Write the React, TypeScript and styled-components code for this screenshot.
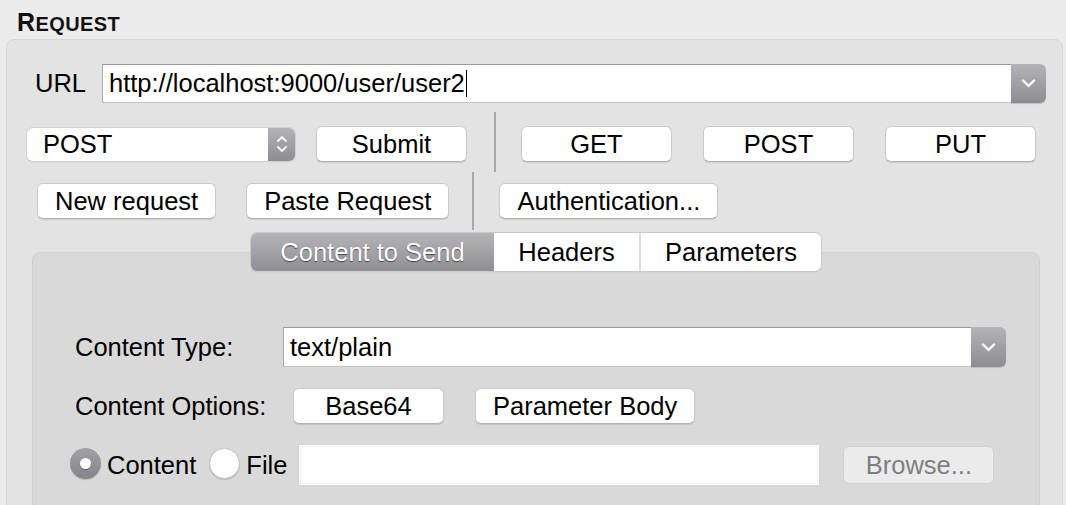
import React from "react";
import styled, { createGlobalStyle, css } from "styled-components";

const FS = "25.5px";

const GlobalStyle = createGlobalStyle`
  html, body {
    margin: 0;
    padding: 0;
    background: #ececec;
    overflow: hidden;
  }
  body {
    font-family: "Liberation Sans", Arial, Helvetica, sans-serif;
    color: #000;
  }
`;

const Page = styled.div`
  width: 1066px;
  height: 505px;
  overflow: hidden;
  font-size: ${FS};
`;

const Title = styled.h1`
  margin: 0;
  box-sizing: border-box;
  height: 39px;
  padding: 10px 0 0 17px;
  font-size: 25px;
  line-height: 25px;
  font-weight: bold;
  color: #111;
  letter-spacing: 0.4px;
  span {
    font-size: 20px;
  }
`;

const Panel = styled.section`
  margin-left: 6px;
  width: 1057px;
  box-sizing: border-box;
  background: #e3e3e3;
  border: 1px solid #d6d6d6;
  border-radius: 8px;
  padding: 24px 0 0 0;
`;

const UrlRow = styled.div`
  display: flex;
  align-items: center;
  height: 39px;
  padding-left: 28px;
`;

const FieldLabel = styled.label<{ $w?: number }>`
  flex: none;
  width: ${(p) => (p.$w ? `${p.$w}px` : "auto")};
  font-size: ${FS};
  white-space: nowrap;
`;

const Combo = styled.div<{ $w: number; $h: number }>`
  display: flex;
  width: ${(p) => p.$w}px;
  height: ${(p) => p.$h}px;
  flex: none;
`;

const ComboField = styled.div`
  flex: 1;
  display: flex;
  align-items: center;
  background: #fff;
  border: 1px solid #a9a9a9;
  border-top-color: #9a9a9a;
  border-bottom-color: #c2c2c2;
  border-right: none;
  padding-left: 6px;
  font-size: ${FS};
  white-space: nowrap;
`;

const Caret = styled.span`
  display: inline-block;
  width: 1px;
  height: 27px;
  background: #000;
  margin-left: 1px;
`;

const ComboArrow = styled.div<{ $w: number }>`
  flex: none;
  width: ${(p) => p.$w}px;
  display: flex;
  align-items: center;
  justify-content: center;
  background: linear-gradient(#b4b4b8, #8c8c91);
  border-radius: 0 6px 6px 0;
  box-shadow: 0 1px 1px rgba(0, 0, 0, 0.15);
`;

const ToolRow = styled.div<{ $top: number; $h: number; $left: number; $padTop: number }>`
  display: flex;
  align-items: center;
  margin-top: ${(p) => p.$top}px;
  height: ${(p) => p.$h}px;
  box-sizing: border-box;
  padding-left: ${(p) => p.$left}px;
  padding-top: ${(p) => p.$padTop}px;
`;

const Separator = styled.div<{ $pull: number; $ml: number }>`
  align-self: stretch;
  margin-top: ${(p) => -p.$pull}px;
  margin-left: ${(p) => p.$ml}px;
  width: 2px;
  background: #a9a9a9;
`;

const Button = styled.button<{ $ml?: number; $disabled?: boolean }>`
  flex: none;
  height: 36px;
  min-width: 151px;
  margin-left: ${(p) => p.$ml ?? 0}px;
  padding: 0 17px;
  box-sizing: border-box;
  background: #fff;
  border: 1px solid #cbcbcb;
  border-bottom-color: #b3b3b3;
  border-radius: 6px;
  box-shadow: 0 1px 1px rgba(0, 0, 0, 0.1);
  font-family: "Liberation Sans", Arial, Helvetica, sans-serif;
  font-size: ${FS};
  color: #000;
  white-space: nowrap;
  ${(p) =>
    p.$disabled &&
    css`
      height: 38px;
      background: #ebebeb;
      border-color: #d2d2d2;
      color: #7f7f7f;
      box-shadow: none;
    `}
`;

const Select = styled.div`
  flex: none;
  display: flex;
  width: 268px;
  height: 33px;
  border-radius: 6px;
  background: #fff;
  box-shadow: 0 0 0 1px #cfcfcf, 0 1px 1px rgba(0, 0, 0, 0.15);
  overflow: hidden;
`;

const SelectValue = styled.div`
  flex: 1;
  display: flex;
  align-items: center;
  padding-left: 16px;
  font-size: ${FS};
`;

const SelectArrow = styled.div`
  width: 27px;
  display: flex;
  align-items: center;
  justify-content: center;
  background: linear-gradient(#b4b4b8, #8c8c91);
`;

const TabbedPane = styled.div`
  margin: 3px 22px 0 25px;
`;

const TabBar = styled.div`
  position: relative;
  z-index: 1;
  display: flex;
  justify-content: center;
  margin-bottom: -19px;
`;

const TabGroup = styled.div`
  display: flex;
  height: 38px;
  box-sizing: border-box;
  border-radius: 6px;
  background: #fff;
  box-shadow: 0 0 0 1px #cacaca, 0 1px 1px rgba(0, 0, 0, 0.2);
  overflow: hidden;
`;

const Tab = styled.div<{ $w: number; $active?: boolean; $divider?: boolean }>`
  width: ${(p) => p.$w}px;
  display: flex;
  align-items: center;
  justify-content: center;
  font-size: ${FS};
  color: #000;
  box-sizing: border-box;
  border-left: ${(p) => (p.$divider ? "2px solid #dddddd" : "none")};
  ${(p) =>
    p.$active &&
    css`
      background: linear-gradient(#b5b5b9, #8e8e93);
      color: #fff;
      text-shadow: 0 1px 1px rgba(0, 0, 0, 0.55);
    `}
`;

const InnerPanel = styled.div`
  background: #d9d9d9;
  border: 1px solid #cfcfcf;
  border-radius: 8px;
  padding: 74px 33px 60px 37px;
`;

const FormGrid = styled.div`
  display: grid;
  grid-template-columns: 208px 723px;
  row-gap: 21px;
  align-items: center;
  padding-left: 5px;
`;

const ButtonGroup = styled.div`
  display: flex;
  gap: 31px;
  padding-left: 10px;
`;

const RadioRow = styled.div`
  display: flex;
  align-items: center;
  height: 42px;
  margin-top: 20px;
`;

const Radio = styled.span<{ $checked?: boolean; $ml?: number }>`
  flex: none;
  position: relative;
  width: 31px;
  height: 31px;
  margin-left: ${(p) => p.$ml ?? 0}px;
  margin-top: -4px;
  border-radius: 50%;
  box-sizing: border-box;
  ${(p) =>
    p.$checked
      ? css`
          background: linear-gradient(#a1a1a6, #838388);
          box-shadow: 0 1px 1px rgba(0, 0, 0, 0.15);
          &::after {
            content: "";
            position: absolute;
            left: 10px;
            top: 10px;
            width: 11px;
            height: 11px;
            border-radius: 50%;
            background: #fff;
            box-shadow: 0 1px 1px rgba(0, 0, 0, 0.3);
          }
        `
      : css`
          background: #fff;
          border: 1px solid #c3c3c3;
          box-shadow: 0 1px 1px rgba(0, 0, 0, 0.15);
        `}
`;

const RadioText = styled.span<{ $ml: number }>`
  margin-left: ${(p) => p.$ml}px;
  font-size: ${FS};
`;

const TextField = styled.div`
  flex: none;
  margin-left: 11px;
  width: 522px;
  height: 42px;
  box-sizing: border-box;
  background: #fff;
  border: 1px solid #d4d4d4;
  box-shadow: inset 0 0 0 1px #fff, inset 0 0 0 2px #f0f0f0;
`;

const Chevron = () => (
  <svg width="15" height="9" viewBox="0 0 15 9">
    <path d="M2 1.5 L7.5 7 L13 1.5" stroke="#fff" strokeWidth="2.4" fill="none" strokeLinecap="round" strokeLinejoin="round" />
  </svg>
);

const UpDown = () => (
  <svg width="12" height="20" viewBox="0 0 12 20">
    <path d="M2 7 L6 3 L10 7" stroke="#fff" strokeWidth="1.8" fill="none" strokeLinecap="round" strokeLinejoin="round" />
    <path d="M2 13 L6 17 L10 13" stroke="#fff" strokeWidth="1.8" fill="none" strokeLinecap="round" strokeLinejoin="round" />
  </svg>
);

export default function App() {
  return (
    <Page>
      <GlobalStyle />
      <Title>
        R<span>EQUEST</span>
      </Title>
      <Panel>
        <UrlRow>
          <FieldLabel $w={67}>URL</FieldLabel>
          <Combo $w={944} $h={39}>
            <ComboField>
              http://localhost:9000/user/user2
              <Caret />
            </ComboField>
            <ComboArrow $w={35}>
              <Chevron />
            </ComboArrow>
          </Combo>
        </UrlRow>

        <ToolRow $top={9} $h={60} $left={20} $padTop={4}>
          <Select>
            <SelectValue>POST</SelectValue>
            <SelectArrow>
              <UpDown />
            </SelectArrow>
          </Select>
          <Button $ml={21}>Submit</Button>
          <Separator $pull={4} $ml={27} />
          <Button $ml={25}>GET</Button>
          <Button $ml={31}>POST</Button>
          <Button $ml={31}>PUT</Button>
        </ToolRow>

        <ToolRow $top={0} $h={58} $left={30} $padTop={0}>
          <Button>New request</Button>
          <Button $ml={30}>Paste Request</Button>
          <Separator $pull={0} $ml={23} />
          <Button $ml={25}>Authentication...</Button>
        </ToolRow>

        <TabbedPane>
          <TabBar>
            <TabGroup>
              <Tab $w={243} $active>
                Content to Send
              </Tab>
              <Tab $w={145}>Headers</Tab>
              <Tab $w={182} $divider>
                Parameters
              </Tab>
            </TabGroup>
          </TabBar>
          <InnerPanel>
            <FormGrid>
              <FieldLabel>Content Type:</FieldLabel>
              <Combo $w={723} $h={40}>
                <ComboField>text/plain</ComboField>
                <ComboArrow $w={35}>
                  <Chevron />
                </ComboArrow>
              </Combo>
              <FieldLabel>Content Options:</FieldLabel>
              <ButtonGroup>
                <Button>Base64</Button>
                <Button>Parameter Body</Button>
              </ButtonGroup>
            </FormGrid>
            <RadioRow>
              <Radio $checked />
              <RadioText $ml={6}>Content</RadioText>
              <Radio $ml={13} />
              <RadioText $ml={6}>File</RadioText>
              <TextField />
              <Button $ml={23} $disabled>
                Browse...
              </Button>
            </RadioRow>
          </InnerPanel>
        </TabbedPane>
      </Panel>
    </Page>
  );
}
